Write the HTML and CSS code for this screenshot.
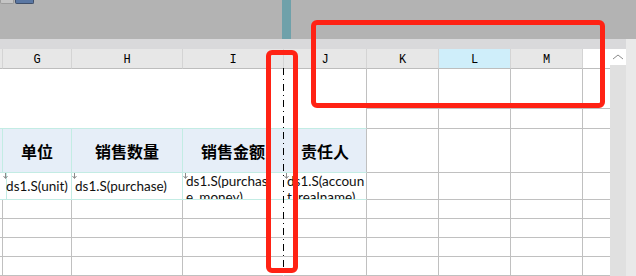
FILE: index.html
```html
<!DOCTYPE html>
<html lang="zh">
<head>
    <meta charset="UTF-8">
    <meta name="viewport" content="width=device-width, initial-scale=1.0">
    <title>报表设计</title>
    <link rel="stylesheet" href="styles.css">
</head>
<body>
    <div class="tela">
        <div class="barra">
            <span class="botao"></span>
            <span class="botao ativo"></span>
            <span class="divisor"></span>
        </div>

        <div class="area">
            <div class="planilha">
                <div class="faixa"></div>
                <div class="corpo">
                    <div class="grade">
                        <!-- letras das colunas -->
                        <div class="cel letra"></div>
                        <div class="cel letra">G</div>
                        <div class="cel letra">H</div>
                        <div class="cel letra">I</div>
                        <div class="cel letra">J</div>
                        <div class="cel letra">K</div>
                        <div class="cel letra sel">L</div>
                        <div class="cel letra">M</div>
                        <div class="cel letra vazia fim"></div>

                        <div class="cel titulo"></div>
                        <div class="cel"></div><div class="cel"></div><div class="cel"></div><div class="cel fim"></div>
                        <div class="cel"></div><div class="cel"></div><div class="cel"></div><div class="cel fim"></div>

                        <div class="cel cab"></div>
                        <div class="cel cab">单位</div>
                        <div class="cel cab">销售数量</div>
                        <div class="cel cab pagina">销售金额</div>
                        <div class="cel cab divisa">责任人</div>
                        <div class="cel"></div><div class="cel"></div><div class="cel"></div><div class="cel fim"></div>

                        <div class="cel dado"></div>
                        <div class="cel dado centro"><svg class="seta-dado" width="5" height="6"><path d="M2.5 0V5M0.5 3L2.5 5.5L4.5 3" fill="none" stroke="#8c8c8c"/></svg>ds1.S(unit)</div>
                        <div class="cel dado"><svg class="seta-dado" width="5" height="6"><path d="M2.5 0V5M0.5 3L2.5 5.5L4.5 3" fill="none" stroke="#8c8c8c"/></svg>ds1.S(purchase)</div>
                        <div class="cel dado quebra pagina"><svg class="seta-dado" width="5" height="6"><path d="M2.5 0V5M0.5 3L2.5 5.5L4.5 3" fill="none" stroke="#8c8c8c"/></svg>ds1.S(purchas<br>e_money)</div>
                        <div class="cel dado quebra divisa"><svg class="seta-dado" width="5" height="6"><path d="M2.5 0V5M0.5 3L2.5 5.5L4.5 3" fill="none" stroke="#8c8c8c"/></svg>ds1.S(accoun<br>t_realname)</div>
                        <div class="cel"></div><div class="cel"></div><div class="cel"></div><div class="cel fim"></div>

                        <div class="cel"></div><div class="cel"></div><div class="cel"></div><div class="cel pagina"></div><div class="cel"></div><div class="cel"></div><div class="cel"></div><div class="cel"></div><div class="cel fim"></div>
                        <div class="cel"></div><div class="cel"></div><div class="cel"></div><div class="cel pagina"></div><div class="cel"></div><div class="cel"></div><div class="cel"></div><div class="cel"></div><div class="cel fim"></div>
                        <div class="cel"></div><div class="cel"></div><div class="cel"></div><div class="cel pagina"></div><div class="cel"></div><div class="cel"></div><div class="cel"></div><div class="cel"></div><div class="cel fim"></div>
                        <div class="cel"></div><div class="cel"></div><div class="cel"></div><div class="cel pagina"></div><div class="cel"></div><div class="cel"></div><div class="cel"></div><div class="cel"></div><div class="cel fim"></div>
                        <div class="cel"></div><div class="cel"></div><div class="cel"></div><div class="cel pagina"></div><div class="cel"></div><div class="cel"></div><div class="cel"></div><div class="cel"></div><div class="cel fim"></div>
                    </div>
                    <div class="rolagem">
                        <div class="rolagem-topo">
                            <svg width="16" height="16"><polyline points="3,10 8,6 13,10" fill="none" stroke="#8a8a8a"/></svg>
                        </div>
                    </div>
                </div>
            </div>
            <div class="lateral"></div>
        </div>

        <div class="linha-quebra"></div>
        <div class="destaque destaque-colunas"></div>
        <div class="destaque destaque-quebra"></div>
    </div>
</body>
</html>
```

FILE: styles.css
```css
body {
    margin: 0;
    font-family: "Noto Sans CJK SC", sans-serif;
    background-color: #fff;
    color: #000;
}

.tela {
    position: relative;
    width: 636px;
    height: 276px;
    overflow: hidden;
}

.barra {
    display: flex;
    align-items: flex-start;
    height: 39px;
    background-color: #b3b3b3;
}

.botao {
    width: 12px;
    height: 3px;
    border: 1px solid #9c9c9c;
    border-top: none;
    border-radius: 0 0 2px 2px;
    background-color: #c4c4c4;
}

.botao.ativo {
    width: 17px;
    margin-left: 1px;
    border-color: #3f4f6a;
    background-color: #5a77a3;
}

.divisor {
    width: 9px;
    height: 100%;
    margin-left: 248px;
    background-color: #6fa1aa;
}

.area {
    display: flex;
    height: 237px;
}

.planilha {
    width: 626px;
}

.lateral {
    width: 10px;
    background-color: #e9e9e9;
}

.faixa {
    height: 10px;
    background-color: #d9d9db;
}

.corpo {
    display: flex;
}

.grade {
    display: grid;
    grid-template-columns: 3px 69px 111px 101px 83px 72px 72px 72px 27px;
    grid-template-rows: 20px 40px 20px 44px 27px repeat(5, 19px);
    width: 610px;
}

.rolagem {
    width: 16px;
    height: 227px;
    background-color: #e0e0e0;
}

.rolagem-topo {
    height: 16px;
    background-color: #fff;
}

.rolagem-topo svg {
    display: block;
}

/* celulas */
.cel {
    box-sizing: border-box;
    border-right: 1px solid #c0c0c0;
    border-bottom: 1px solid #c0c0c0;
}

.fim {
    border-right: none;
}

.letra {
    display: flex;
    align-items: center;
    justify-content: center;
    padding-top: 2px;
    background-color: #e7e7e7;
    border-right-color: #d4d4d4;
    border-bottom-color: #bdbdbd;
    font-family: "Liberation Mono", monospace;
    font-size: 12px;
}

.letra.sel {
    background-color: #cfeefa;
}

.letra.vazia {
    background-color: #fff;
}

.titulo {
    grid-column: 1 / 6;
    grid-row: 2 / 4;
    border-bottom-color: #c3ece4;
}

.cab {
    display: flex;
    align-items: center;
    justify-content: center;
    background-color: #e6eef8;
    border-color: #c3ece4;
    font-size: 16px;
    font-weight: bold;
}

.dado {
    position: relative;
    display: flex;
    align-items: center;
    padding: 0 3px;
    overflow: hidden;
    border-color: #c3ece4;
    font-family: Lato, "Noto Sans CJK SC", sans-serif;
    font-size: 13.5px;
    line-height: 18px;
    color: #101010;
    white-space: nowrap;
}

.dado.centro {
    justify-content: center;
    padding: 0;
}

.dado.quebra {
    display: block;
    padding-left: 3px;
    line-height: 16px;
}

.seta-dado {
    position: absolute;
    left: 0;
    top: 0;
}

.pagina {
    border-right-color: transparent;
}

.divisa {
    border-right-color: #c0c0c0;
}

/* linha de quebra de pagina e marcacoes */
.linha-quebra {
    position: absolute;
    left: 283px;
    top: 68px;
    bottom: 0;
    width: 1px;
    background: repeating-linear-gradient(to bottom, #000 0 7px, transparent 7px 11px, #000 11px 12px, transparent 12px 16px);
}

.destaque {
    position: absolute;
    box-sizing: border-box;
    border: 5px solid #ff2214;
    border-radius: 6px;
}

.destaque-colunas {
    left: 311px;
    top: 20px;
    width: 294px;
    height: 88px;
}

.destaque-quebra {
    left: 266px;
    top: 50px;
    width: 32px;
    height: 223px;
}
```
